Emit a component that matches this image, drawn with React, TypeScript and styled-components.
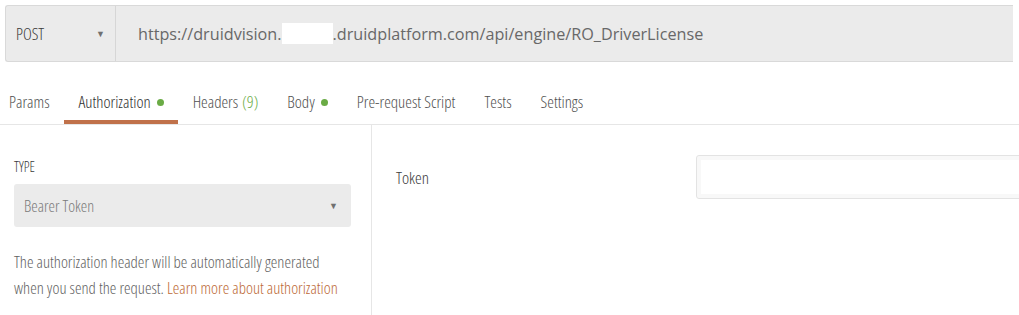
import React from 'react';
import styled, { createGlobalStyle } from 'styled-components';

const GlobalStyle = createGlobalStyle`
  html, body {
    margin: 0;
    padding: 0;
    background: #ffffff;
  }

  body {
    font-family: 'Open Sans', 'Liberation Sans', sans-serif;
    color: #505050;
    overflow: hidden;
  }
`;

const Page = styled.div`
  width: 1019px;
  height: 315px;
  overflow: hidden;
`;

const RequestBar = styled.div`
  display: flex;
  height: 55px;
  margin: 5px 6px 0 5px;
  background: #ebebeb;
  border: 1px solid #d9d9d9;
  border-right: none;
  border-radius: 3px 0 0 3px;
`;

const MethodSelect = styled.div`
  display: flex;
  align-items: center;
  justify-content: space-between;
  width: 110px;
  box-sizing: border-box;
  padding: 0 10px 0 10px;
  border-right: 1px solid #d6d6d6;
  font-size: 16.7px;
  font-stretch: condensed;
  font-weight: 300;
  color: #3a3a3a;
`;

const Caret = styled.span`
  font-size: 9px;
  color: #707070;
`;

const UrlText = styled.div`
  display: flex;
  align-items: center;
  padding-left: 22px;
  font-size: 16.2px;
  color: #686868;
  white-space: nowrap;
`;

const Redacted = styled.span`
  display: inline-block;
  width: 51px;
  height: 21px;
  background: #ffffff;
`;

const TabBar = styled.div`
  display: flex;
  border-bottom: 1px solid #e6e6e6;
`;

const Tab = styled.div<{ $active?: boolean }>`
  display: flex;
  align-items: center;
  padding: 28px 14px 6px 15px;
  line-height: 24px;
  font-size: 16.8px;
  font-stretch: condensed;
  font-weight: 300;
  color: ${(p) => (p.$active ? '#303030' : '#505050')};
  border-bottom: 4px solid ${(p) => (p.$active ? '#c0714a' : 'transparent')};

  &:first-child {
    margin-left: -6px;
  }
`;

const Dot = styled.span`
  width: 7px;
  height: 7px;
  margin-left: 6px;
  border-radius: 50%;
  background: #6aab45;
`;

const Count = styled.span`
  margin-left: 4px;
  color: #6aab45;
`;

const Content = styled.div`
  display: grid;
  grid-template-columns: 372px 1fr;
  height: 190px;
`;

const LeftPanel = styled.div`
  padding: 34px 20px 0 14px;
  border-right: 1px solid #e6e6e6;
`;

const Label = styled.div`
  font-size: 14px;
  line-height: 16px;
  font-stretch: condensed;
  font-weight: 300;
  color: #3a3a3a;
  text-transform: uppercase;
`;

const TypeSelect = styled.div`
  display: flex;
  align-items: center;
  justify-content: space-between;
  height: 43px;
  margin-top: 9px;
  padding: 0 13px 0 10px;
  background: #ebebeb;
  border-radius: 3px;
  font-size: 16.3px;
  font-stretch: condensed;
  font-weight: 300;
  color: #7a7a7a;
`;

const Description = styled.p`
  margin: 22px 0 0;
  font-size: 16.6px;
  line-height: 26px;
  font-stretch: condensed;
  font-weight: 300;
  color: #626262;
  white-space: nowrap;
`;

const Link = styled.a`
  color: #bd6a37;
  text-decoration: none;
`;

const RightPanel = styled.div`
  padding: 30px 0 0 24px;
`;

const FieldRow = styled.div`
  display: grid;
  grid-template-columns: 300px 1fr;
  align-items: center;
`;

const FieldLabel = styled.div`
  font-size: 17px;
  font-stretch: condensed;
  font-weight: 300;
  color: #3a3a3a;
`;

const TokenInput = styled.div`
  height: 42px;
  margin-right: -10px;
  border: 1px solid #e3e3e3;
  border-radius: 3px;
  background: #ffffff;
  box-shadow: inset 0 0 0 4px #f8f8f8;
`;

export default function App() {
  return (
    <Page>
      <GlobalStyle />
      <RequestBar>
        <MethodSelect>
          <span>POST</span>
          <Caret>▼</Caret>
        </MethodSelect>
        <UrlText>
          https://druidvision.<Redacted />.druidplatform.com/api/engine/RO_DriverLicense
        </UrlText>
      </RequestBar>
      <TabBar>
        <Tab>Params</Tab>
        <Tab $active>
          Authorization<Dot />
        </Tab>
        <Tab>
          Headers<Count>(9)</Count>
        </Tab>
        <Tab>
          Body<Dot />
        </Tab>
        <Tab>Pre-request Script</Tab>
        <Tab>Tests</Tab>
        <Tab>Settings</Tab>
      </TabBar>
      <Content>
        <LeftPanel>
          <Label>Type</Label>
          <TypeSelect>
            <span>Bearer Token</span>
            <Caret>▼</Caret>
          </TypeSelect>
          <Description>
            The authorization header will be automatically generated
            <br />
            when you send the request. <Link>Learn more about authorization</Link>
          </Description>
        </LeftPanel>
        <RightPanel>
          <FieldRow>
            <FieldLabel>Token</FieldLabel>
            <TokenInput />
          </FieldRow>
        </RightPanel>
      </Content>
    </Page>
  );
}
